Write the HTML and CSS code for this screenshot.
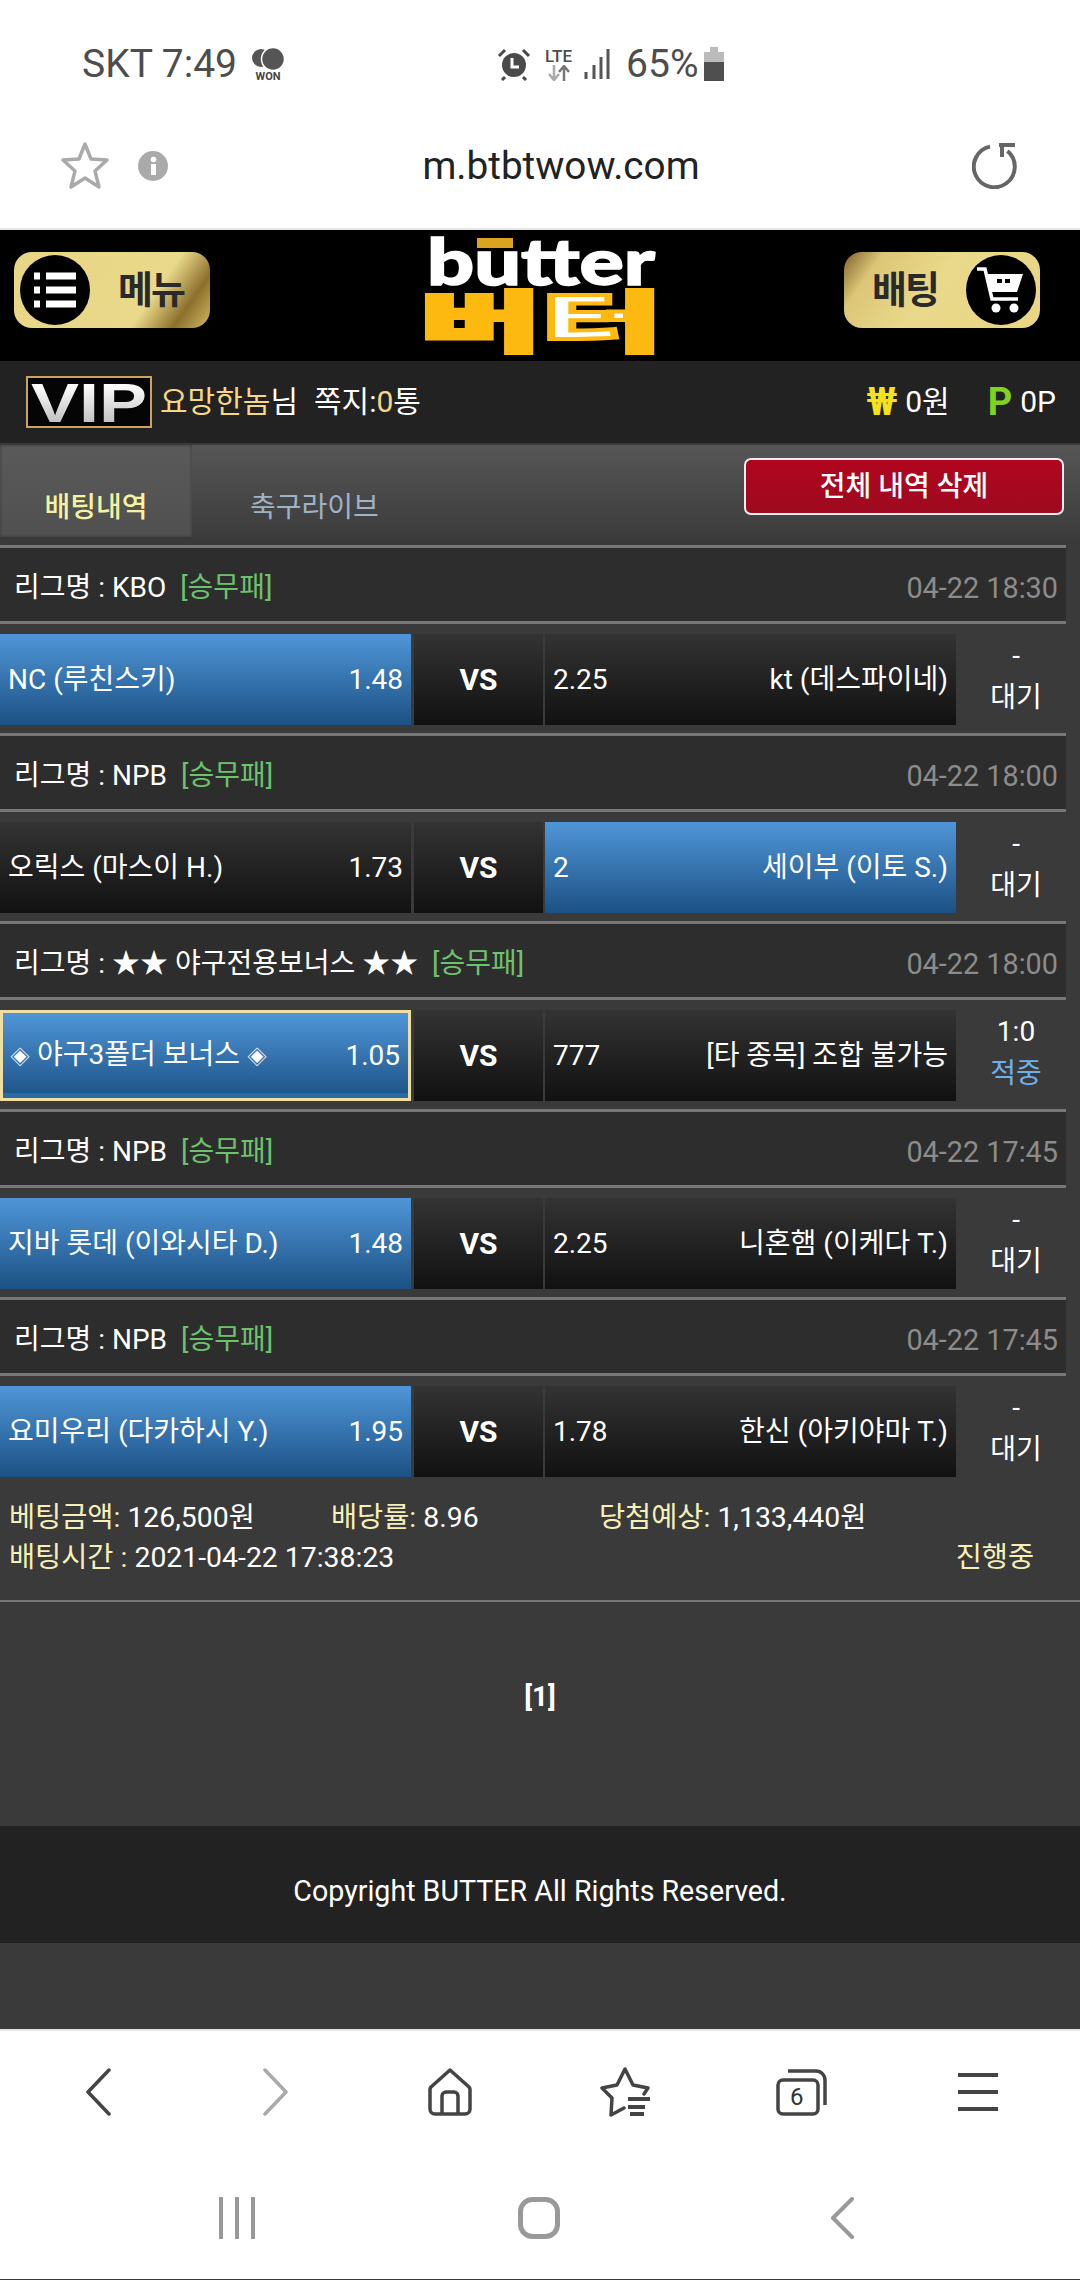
FILE: index.html
```html
<!DOCTYPE html>
<html lang="ko">
<head>
    <meta charset="UTF-8">
    <meta name="viewport" content="width=device-width, initial-scale=1.0">
    <title>Butter</title>
    <link rel="stylesheet" href="styles.css">
</head>
<body>
    <div class="status-bar">
        <div class="status-left">
            <span>SKT 7:49</span>
            <span class="won-icon">
                <svg width="34" height="24" viewBox="0 0 34 24"><circle cx="10" cy="11" r="9" fill="#555"/><circle cx="22" cy="12" r="11.5" fill="#555" stroke="#fff" stroke-width="1.5"/></svg>
                <span class="won-label">WON</span>
            </span>
        </div>
        <div class="status-right">
            <svg class="alarm" width="34" height="34" viewBox="0 0 34 34"><circle cx="17" cy="18" r="12" fill="#4a4a4a"/><path d="M15 11v9h7" fill="none" stroke="#fff" stroke-width="3"/><path d="M2 9l6-6M32 9l-6-6M8 30l-3 3M26 30l3 3" stroke="#4a4a4a" stroke-width="3"/></svg>
            <span class="lte">
                <span class="lte-label">LTE</span>
                <svg width="24" height="16" viewBox="0 0 24 16"><path d="M7 0v14M2 9l5 6 5-6" fill="none" stroke="#aaa" stroke-width="2.5"/><path d="M17 16V2M12 7l5-6 5 6" fill="none" stroke="#777" stroke-width="2.5"/></svg>
            </span>
            <svg class="signal" width="26" height="32" viewBox="0 0 26 32"><path d="M2 24v7M10 17v14M17 9v22M24 1v30" stroke="#555" stroke-width="3"/></svg>
            <span class="battery-text">65%</span>
            <svg width="20" height="34" viewBox="0 0 20 34"><path d="M6 0h8v5H6z" fill="#bbb"/><rect x="0" y="5" width="20" height="10" fill="#bbb"/><rect x="0" y="15" width="20" height="19" fill="#4f4f4f"/></svg>
        </div>
    </div>

    <div class="url-bar">
        <svg class="url-star" width="50" height="50" viewBox="0 0 50 50"><path d="M25 3l6 15 16 1-12 11 4 16-14-9-14 9 4-16L3 19l16-1z" fill="none" stroke="#aaa" stroke-width="3.5" stroke-linejoin="round"/></svg>
        <svg class="url-info" width="30" height="30" viewBox="0 0 30 30"><circle cx="15" cy="15" r="15" fill="#aaa"/><rect x="13" y="13" width="5" height="11" fill="#fff"/><circle cx="15.5" cy="8.500" r="2.800" fill="#fff"/></svg>
        <div class="url-text">m.btbtwow.com</div>
        <svg class="url-reload" width="46" height="46" viewBox="0 0 46 46"><path d="M31 5.500A20.500 20.500 0 1 1 13 5.500" fill="none" stroke="#666" stroke-width="4" transform="rotate(14 23 25)"/><path d="M27 2h16M30 2v12" fill="none" stroke="#666" stroke-width="4"/></svg>
    </div>

    <div class="site-header">
        <div class="gold-pill gold-left">
            <span class="pill-circle">
                <svg width="46" height="40" viewBox="0 0 46 40"><path d="M2 6h6M14 6h30M2 20h6M14 20h30M2 34h6M14 34h30" stroke="#fff" stroke-width="7"/></svg>
            </span>
            <span class="pill-label">메뉴</span>
        </div>
        <svg class="logo" width="228" height="118" viewBox="0 0 228 118">
            <defs>
                <linearGradient id="logoFill" gradientUnits="userSpaceOnUse" x1="0" y1="0" x2="228" y2="0">
                    <stop offset="0.51" stop-color="#fdb90f"/>
                    <stop offset="0.51" stop-color="#fff"/>
                    <stop offset="0.86" stop-color="#fff"/>
                    <stop offset="0.86" stop-color="#fdb90f"/>
                </linearGradient>
            </defs>
            <rect x="50" y="0" width="36" height="10" fill="#d9a520"/>
            <text class="logo-en" x="0" y="47" textLength="228" lengthAdjust="spacingAndGlyphs">butter</text>
            <text class="logo-ko" x="-7" y="108" textLength="242" lengthAdjust="spacingAndGlyphs" fill="url(#logoFill)" stroke="#fdb90f" stroke-width="4">버터</text>
        </svg>
        <div class="gold-pill gold-right">
            <span class="pill-label">배팅</span>
            <span class="pill-circle">
                <svg width="52" height="52" viewBox="0 0 52 52"><path d="M2 5h8l7 30h26" fill="none" stroke="#fff" stroke-width="3.500"/><path d="M12 10h36l-6 18H16z" fill="#fff"/><path d="M22 15h5v4h-5zM30 15h5v4h-5z" fill="#000"/><circle cx="21" cy="44" r="4.500" fill="#fff"/><circle cx="39" cy="44" r="4.500" fill="#fff"/></svg>
            </span>
        </div>
    </div>

    <div class="user-bar">
        <div class="user-left">
            <svg class="vip" width="126" height="52" viewBox="0 0 126 52">
                <defs>
                    <linearGradient id="vipFill" x1="0" y1="0" x2="0" y2="1">
                        <stop offset="0.2" stop-color="#fff"/>
                        <stop offset="0.85" stop-color="#bdbdbd"/>
                    </linearGradient>
                </defs>
                <rect x="1" y="1" width="124" height="50" fill="#050505" stroke="#c9a45a" stroke-width="2"/>
                <text class="vip-text" x="5" y="46" textLength="116" lengthAdjust="spacingAndGlyphs" fill="url(#vipFill)">VIP</text>
            </svg>
            <span class="user-text"><span class="gold">요망한놈</span>님<span class="msg-count">쪽지:<span class="gold">0</span>통</span></span>
        </div>
        <div class="user-right">
            <span class="money-mark yellow">₩</span><span>0원</span>
            <span class="money-mark green point-mark">P</span><span>0P</span>
        </div>
    </div>

    <div class="tab-bar">
        <div class="tab tab-active">배팅내역</div>
        <div class="tab tab-live">축구라이브</div>
        <button class="delete-btn">전체 내역 삭제</button>
    </div>

    <div class="bet-list">
        <div class="bet-block">
            <div class="league-row">
                <span>리그명 : KBO <span class="green-tag">[승무패]</span></span>
                <span class="game-time">04-22 18:30</span>
            </div>
            <div class="match-row">
                <div class="pick pick-home pick-on"><span>NC (루친스키)</span><span>1.48</span></div>
                <div class="vs">VS</div>
                <div class="pick pick-away"><span>2.25</span><span>kt (데스파이네)</span></div>
                <div class="result"><span>-</span><span>대기</span></div>
            </div>
        </div>
        <div class="bet-block">
            <div class="league-row">
                <span>리그명 : NPB <span class="green-tag">[승무패]</span></span>
                <span class="game-time">04-22 18:00</span>
            </div>
            <div class="match-row">
                <div class="pick pick-home"><span>오릭스 (마스이 H.)</span><span>1.73</span></div>
                <div class="vs">VS</div>
                <div class="pick pick-away pick-on"><span>2</span><span>세이부 (이토 S.)</span></div>
                <div class="result"><span>-</span><span>대기</span></div>
            </div>
        </div>
        <div class="bet-block">
            <div class="league-row">
                <span>리그명 : ★★ 야구전용보너스 ★★ <span class="green-tag">[승무패]</span></span>
                <span class="game-time">04-22 18:00</span>
            </div>
            <div class="match-row">
                <div class="pick pick-home pick-on pick-framed"><span><span class="diamond">◈</span> 야구3폴더 보너스 <span class="diamond">◈</span></span><span>1.05</span></div>
                <div class="vs">VS</div>
                <div class="pick pick-away"><span>777</span><span>[타 종목] 조합 불가능</span></div>
                <div class="result"><span>1:0</span><span class="hit">적중</span></div>
            </div>
        </div>
        <div class="bet-block">
            <div class="league-row">
                <span>리그명 : NPB <span class="green-tag">[승무패]</span></span>
                <span class="game-time">04-22 17:45</span>
            </div>
            <div class="match-row">
                <div class="pick pick-home pick-on"><span>지바 롯데 (이와시타 D.)</span><span>1.48</span></div>
                <div class="vs">VS</div>
                <div class="pick pick-away"><span>2.25</span><span>니혼햄 (이케다 T.)</span></div>
                <div class="result"><span>-</span><span>대기</span></div>
            </div>
        </div>
        <div class="bet-block">
            <div class="league-row">
                <span>리그명 : NPB <span class="green-tag">[승무패]</span></span>
                <span class="game-time">04-22 17:45</span>
            </div>
            <div class="match-row">
                <div class="pick pick-home pick-on"><span>요미우리 (다카하시 Y.)</span><span>1.95</span></div>
                <div class="vs">VS</div>
                <div class="pick pick-away"><span>1.78</span><span>한신 (아키야마 T.)</span></div>
                <div class="result"><span>-</span><span>대기</span></div>
            </div>
        </div>
    </div>

    <div class="summary">
        <div class="summary-row">
            <span class="sum-money"><span class="cream">베팅금액:</span> 126,500원</span>
            <span class="sum-rate"><span class="cream">배당률:</span> 8.96</span>
            <span><span class="cream">당첨예상:</span> 1,133,440원</span>
        </div>
        <div class="summary-row summary-time">
            <span><span class="cream">배팅시간 :</span> 2021-04-22 17:38:23</span>
            <span class="cream">진행중</span>
        </div>
    </div>

    <div class="pagination">[1]</div>
    <div class="copyright">Copyright BUTTER All Rights Reserved.</div>
    <div class="page-end"></div>

    <div class="browser-nav">
        <div class="nav-cell">
            <svg width="26" height="48" viewBox="0 0 26 48"><path d="M24 2L3 24l21 22" fill="none" stroke="#444" stroke-width="3.500" stroke-linecap="round" stroke-linejoin="round"/></svg>
        </div>
        <div class="nav-cell nav-forward">
            <svg width="26" height="48" viewBox="0 0 26 48"><path d="M2 2l21 22L2 46" fill="none" stroke="#aaa" stroke-width="3.500" stroke-linecap="round" stroke-linejoin="round"/></svg>
        </div>
        <div class="nav-cell">
            <svg width="48" height="48" viewBox="0 0 48 48"><path d="M24 2L5 19a4 4 0 0 0-1 3v19a5 5 0 0 0 5 5h30a5 5 0 0 0 5-5V22a4 4 0 0 0-1-3z M16 46V28a4 4 0 0 1 4-4h8a4 4 0 0 1 4 4v18" fill="none" stroke="#444" stroke-width="3.500" stroke-linejoin="round"/></svg>
        </div>
        <div class="nav-cell">
            <svg width="52" height="50" viewBox="0 0 52 50"><path d="M24 41L11 48l1-17L2 21l15-3 8-16 8 16 15 3-4 6" fill="none" stroke="#444" stroke-width="3.500" stroke-linejoin="round" stroke-linecap="round"/><path d="M28 32h22M28 40h17M30 47h14" stroke="#444" stroke-width="4"/></svg>
        </div>
        <div class="nav-cell">
            <span class="tabs-icon">
                <svg width="52" height="48" viewBox="0 0 52 48"><rect x="2" y="12" width="40" height="34" rx="5" fill="none" stroke="#444" stroke-width="3.500"/><path d="M12 3h28a9 9 0 0 1 9 9v25" fill="none" stroke="#444" stroke-width="3.500"/></svg>
                <span class="tabs-count">6</span>
            </span>
        </div>
        <div class="nav-cell">
            <svg width="42" height="40" viewBox="0 0 42 40"><path d="M1 3h40M1 20h40M1 37h40" stroke="#444" stroke-width="4"/></svg>
        </div>
    </div>

    <div class="system-nav">
        <svg width="38" height="42" viewBox="0 0 38 42"><path d="M3 1v40M19 1v40M35 1v40" stroke="#999" stroke-width="4" stroke-linecap="round"/></svg>
        <svg class="system-home" width="42" height="42" viewBox="0 0 42 42"><rect x="2.500" y="2.500" width="37" height="37" rx="12" fill="none" stroke="#999" stroke-width="5"/></svg>
        <svg width="24" height="42" viewBox="0 0 24 42"><path d="M22 2L3 21l19 19" fill="none" stroke="#999" stroke-width="4" stroke-linecap="round" stroke-linejoin="round"/></svg>
    </div>
</body>
</html>
```

FILE: styles.css
```css
body {
    margin: 0;
    width: 1080px;
    height: 2280px;
    overflow: hidden;
    background-color: #3a3a3a;
    color: #fff;
    font-family: Roboto, 'Noto Sans CJK KR', sans-serif;
    font-size: 28px;
    line-height: 40px;
}

/* phone status bar */
.status-bar {
    display: flex;
    align-items: center;
    height: 128px;
    box-sizing: border-box;
    padding: 0 0 0 82px;
    background-color: #fff;
    color: #4d4d4d;
    font-size: 39px;
}
.status-left {
    display: flex;
    align-items: center;
    width: 415px;
    gap: 14px;
}
.won-icon {
    display: flex;
    flex-direction: column;
    align-items: center;
    color: #444;
}
.won-label {
    font-size: 11px;
    line-height: 11px;
    font-weight: 700;
}
.status-right {
    display: flex;
    align-items: center;
}
.lte {
    display: flex;
    flex-direction: column;
    align-items: center;
    margin: 0 12px 0 14px;
}
.lte-label {
    font-size: 17px;
    line-height: 18px;
    font-weight: 500;
}
.signal {
    margin-right: 16px;
}
.battery-text {
    margin-right: 6px;
}

/* browser url bar */
.url-bar {
    display: flex;
    align-items: center;
    height: 80px;
    padding: 0 62px 22px 60px;
    background-color: #fff;
    border-bottom: 2px solid #e6e6e6;
    margin-top: -2px;
}
.url-info {
    margin-left: 28px;
}
.url-text {
    flex: 1;
    text-align: center;
    padding-right: 18px;
    color: #222;
    font-size: 38.700px;
}

/* site header */
.site-header {
    display: flex;
    justify-content: space-between;
    align-items: center;
    height: 131px;
    padding: 0 40px 0 14px;
    background-color: #000;
}
.gold-pill {
    display: flex;
    align-items: center;
    justify-content: space-between;
    width: 196px;
    height: 76px;
    margin-bottom: 12px;
    box-sizing: border-box;
    padding: 0 4px 0 6px;
    border-radius: 18px;
    color: #2a2a2a;
}
.gold-left {
    padding-right: 26px;
    background: linear-gradient(125deg, #e8d585 0%, #ead98a 68%, #8d6f2c 85%, #d2b964 100%);
}
.gold-right {
    padding-left: 28px;
    background: linear-gradient(125deg, #7d6128 0%, #dcc678 16%, #ead98a 45%, #e8d585 100%);
}
.pill-circle {
    display: flex;
    align-items: center;
    justify-content: center;
    width: 70px;
    height: 70px;
    border-radius: 50%;
    background-color: #000;
}
.pill-label {
    font-size: 38px;
    font-weight: 700;
    letter-spacing: -2px;
}
.logo {
    margin: 3px 0 0 28px;
    overflow: visible;
}
.logo-en {
    font-family: Lato, sans-serif;
    font-size: 64px;
    font-weight: 900;
    fill: #fff;
    stroke: #fff;
    stroke-width: 1.500px;
}
.logo-ko {
    font-family: 'Noto Sans CJK KR', sans-serif;
    font-size: 66px;
    font-weight: 900;
}

/* user info */
.user-bar {
    display: flex;
    justify-content: space-between;
    align-items: center;
    height: 82px;
    padding: 0 24px 0 26px;
    background-color: #222;
    font-size: 30px;
}
.user-left {
    display: flex;
    align-items: center;
    gap: 8px;
}
.vip {
    overflow: visible;
}
.vip-text {
    font-family: 'Liberation Sans', sans-serif;
    font-size: 55px;
    font-weight: 700;
}
.msg-count {
    margin-left: 16px;
}
.gold {
    color: #f6d783;
}
.user-right {
    display: flex;
    align-items: center;
}
.money-mark {
    font-size: 38px;
    font-weight: 700;
    margin-right: 8px;
}
.point-mark {
    margin-left: 38px;
}
.yellow {
    color: #f4e21c;
}
.green {
    color: #7ed321;
}

/* tabs */
.tab-bar {
    display: flex;
    align-items: flex-end;
    height: 92px;
    margin-top: 2px;
    background: linear-gradient(#565656, #3c3c3c);
}
.tab {
    height: 92px;
    box-sizing: border-box;
    padding-top: 43px;
    text-align: center;
}
.tab-active {
    width: 192px;
    background: linear-gradient(#5a5a5a, #505050);
    box-shadow: inset 0 0 3px #333;
    color: #f5f3a0;
    font-weight: 500;
}
.tab-live {
    margin-left: 58px;
    color: #9fb3c8;
}
.delete-btn {
    margin: 0 16px 22px auto;
    width: 320px;
    height: 57px;
    box-sizing: border-box;
    padding: 0;
    border: 2px solid #eee;
    border-radius: 7px;
    background: linear-gradient(#b0061e, #9e0a20);
    color: #fff;
    font: inherit;
    font-weight: 500;
}

/* bets */
.bet-list {
    width: 1066px;
    margin-top: 8px;
}
.bet-block {
    border-top: 3px solid #777;
    height: 185px;
}
.league-row {
    display: flex;
    justify-content: space-between;
    align-items: center;
    height: 73px;
    padding: 6px 8px 0 14px;
    box-sizing: content-box;
    height: 67px;
    background-color: #2d2d2d;
    border-bottom: 3px solid #777;
}
.green-tag {
    margin-left: 7px;
    color: #6cc36c;
}
.game-time {
    color: #8c8c8c;
    font-size: 28.800px;
}
.match-row {
    display: flex;
    margin-top: 10px;
    height: 91px;
}
.pick {
    display: flex;
    flex: none;
    justify-content: space-between;
    align-items: center;
    width: 411px;
    box-sizing: border-box;
    padding: 0 8px;
    background: linear-gradient(#333, #111);
}
.pick-on {
    background: linear-gradient(#4f96d8, #1c5184);
}
.pick-framed {
    padding: 0 8px 0 7px;
    border: 3px solid #f0dfa0;
    box-shadow: inset 0 -5px 0 #2a6ba3;
}
.diamond {
    font-size: 20px;
}
.vs {
    flex: none;
    width: 129px;
    margin: 0 2px 0 3px;
    background: linear-gradient(#333, #111);
    line-height: 91px;
    text-align: center;
    font-size: 30px;
    font-weight: 700;
}
.result {
    display: flex;
    flex: none;
    flex-direction: column;
    justify-content: center;
    align-items: center;
    width: 120px;
    box-sizing: border-box;
    padding-bottom: 6px;
    line-height: 42px;
}
.hit {
    color: #6fb0ea;
}

/* totals */
.summary {
    height: 102px;
    padding: 21px 46px 0 9px;
    border-bottom: 2px solid #777;
    margin-top: -8px;
    font-size: 28.400px;
}
.summary-row {
    display: flex;
}
.summary-time {
    justify-content: space-between;
}
.cream {
    color: #f6f0b8;
}
.sum-money {
    width: 322px;
}
.sum-rate {
    width: 268px;
}
.pagination {
    height: 224px;
    box-sizing: border-box;
    padding-top: 75px;
    text-align: center;
    font-weight: 700;
}
.copyright {
    height: 117px;
    box-sizing: border-box;
    padding-top: 45px;
    background-color: #222;
    text-align: center;
    font-size: 28.600px;
}
.page-end {
    height: 86px;
}

/* browser toolbar */
.browser-nav {
    display: flex;
    height: 124px;
    box-sizing: border-box;
    padding-left: 10px;
    align-items: center;
    background-color: #fff;
    border-top: 2px solid #e6e6e6;
}
.nav-cell {
    display: flex;
    justify-content: center;
    width: 176px;
}
.nav-forward {
    padding-left: 4px;
    width: 172px;
}
.tabs-icon {
    display: flex;
    position: relative;
}
.tabs-count {
    position: absolute;
    left: 14px;
    top: 13px;
    color: #333;
    font-size: 24px;
    line-height: 32px;
}
.system-nav {
    display: flex;
    justify-content: space-between;
    align-items: center;
    height: 126px;
    box-sizing: border-box;
    padding: 4px 226px 0 218px;
    background-color: #fff;
}
.system-home {
    margin-right: 8px;
}
```
